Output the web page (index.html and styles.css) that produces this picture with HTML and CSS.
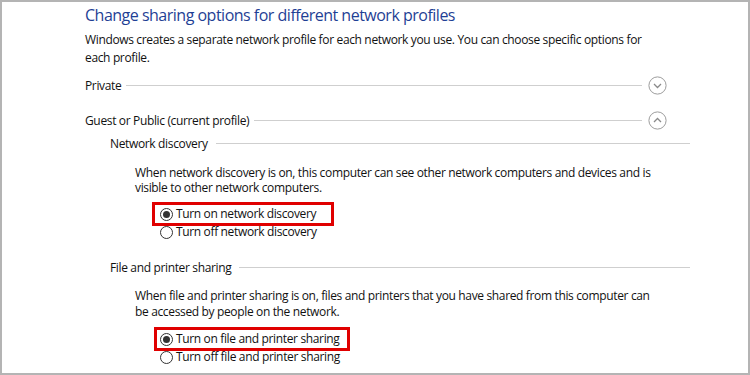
FILE: index.html
```html
<!DOCTYPE html>
<html>
<head>
<meta charset="utf-8">
<link rel="stylesheet" href="styles.css">
</head>
<body>
<div class="frame">
  <h1 class="title">Change sharing options for different network profiles</h1>
  <p class="intro">Windows creates a separate network profile for each network you use. You can choose specific options for each profile.</p>

  <div class="profile profile-private">
    <span class="label">Private</span>
    <span class="rule"></span>
    <span class="toggle">
      <svg width="19" height="19" viewBox="0 0 19 19"><circle cx="9.5" cy="9.5" r="8.6" fill="none" stroke="#9c9c9c" stroke-width="1"/><path d="M6 8 L9.5 11.5 L13 8" fill="none" stroke="#8a8a8a" stroke-width="1.3"/></svg>
    </span>
  </div>

  <div class="profile profile-guest">
    <span class="label">Guest or Public (current profile)</span>
    <span class="rule"></span>
    <span class="toggle">
      <svg width="19" height="19" viewBox="0 0 19 19"><circle cx="9.5" cy="9.5" r="8.6" fill="none" stroke="#9c9c9c" stroke-width="1"/><path d="M6 11 L9.5 7.5 L13 11" fill="none" stroke="#8a8a8a" stroke-width="1.3"/></svg>
    </span>
  </div>

  <div class="group group-discovery">
    <div class="group-head"><span class="label">Network discovery</span><span class="rule"></span></div>
    <p class="desc">When network discovery is on, this computer can see other network computers and devices and is visible to other network computers.</p>
    <div class="options">
      <label class="option marked mark-discovery"><span class="radio checked"></span>Turn on network discovery</label>
      <label class="option"><span class="radio"></span>Turn off network discovery</label>
    </div>
  </div>

  <div class="group group-sharing">
    <div class="group-head"><span class="label">File and printer sharing</span><span class="rule"></span></div>
    <p class="desc">When file and printer sharing is on, files and printers that you have shared from this computer can be accessed by people on the network.</p>
    <div class="options">
      <label class="option marked mark-sharing"><span class="radio checked"></span>Turn on file and printer sharing</label>
      <label class="option"><span class="radio"></span>Turn off file and printer sharing</label>
    </div>
  </div>
</div>
</body>
</html>
```

FILE: styles.css
```css
html, body {
  margin: 0;
  padding: 0;
  background: #ffffff;
}

.frame {
  box-sizing: border-box;
  width: 750px;
  height: 375px;
  border: 2px solid #b4b4b4;
  padding: 0 0 0 83px;
  overflow: hidden;
  font-family: "Open Sans", "Noto Sans", sans-serif;
  font-size: 12px;
  letter-spacing: -0.35px;
  color: #111111;
}

.title {
  margin: 0;
  font-size: 16px;
  letter-spacing: -0.5px;
  font-weight: 400;
  line-height: 26px;
  color: #1f3f95;
}

.intro {
  margin: 3px 0 0 0;
  width: 580px;
  line-height: 18px;
}

.profile {
  display: flex;
  align-items: center;
  width: 582px;
  height: 24px;
}

.profile-private { margin-top: 6px; }
.profile-guest { margin-top: 11px; }

.rule {
  flex: 1;
  height: 1px;
  background: #cfcfcf;
  margin: 0 6px 0 5px;
}

.toggle {
  display: flex;
  width: 19px;
  height: 19px;
}

.group {
  padding-left: 25px;
}

.group-discovery { margin-top: 2px; }
.group-sharing { margin-top: 17px; }

.group-head {
  display: flex;
  align-items: center;
  width: 580px;
  height: 18px;
}

.group-head .rule {
  margin: 0 0 0 8px;
}

.desc {
  margin: 13px 0 0 25px;
  width: 530px;
  line-height: 15px;
}

.group-sharing .desc {
  margin-top: 12px;
  line-height: 16px;
}

.options {
  margin: 10px 0 0 50px;
  display: flex;
  flex-direction: column;
  align-items: flex-start;
}

.option {
  display: inline-flex;
  align-items: center;
  height: 18px;
  line-height: 18px;
}

.radio {
  box-sizing: border-box;
  width: 13px;
  height: 13px;
  border: 1px solid #333333;
  border-radius: 50%;
  margin-right: 3px;
  display: inline-flex;
  align-items: center;
  justify-content: center;
  background: #fff;
}

.radio.checked::after {
  content: "";
  width: 7px;
  height: 7px;
  border-radius: 50%;
  background: #333333;
}

.marked {
  outline: 3px solid #e00000;
}

.mark-discovery {
  margin-left: -5px;
  padding: 0 15px 0 5px;
}

.mark-sharing {
  margin-left: -3px;
  padding: 0 7px 0 3px;
}
```
